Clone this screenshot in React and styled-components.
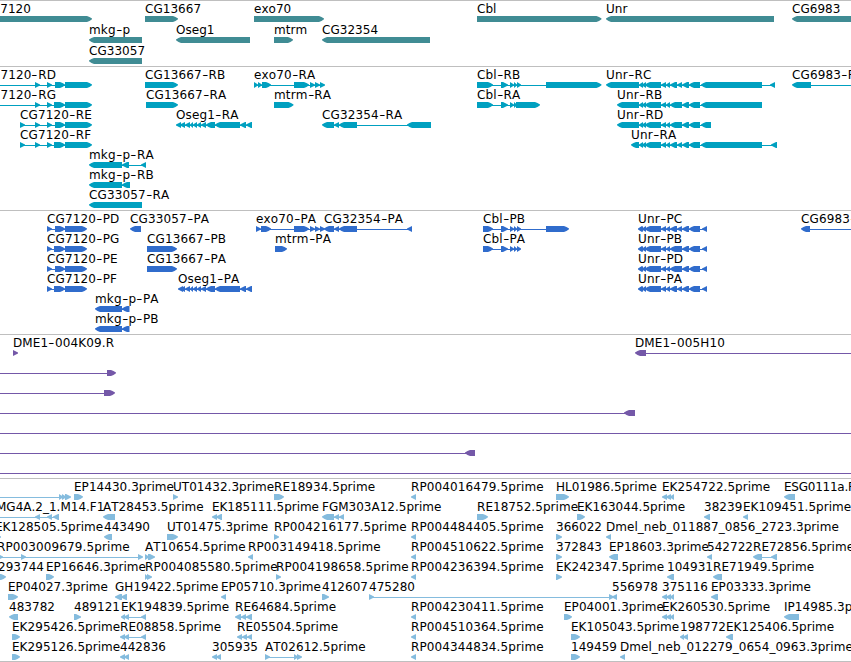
import React from 'react'
import styled, { createGlobalStyle } from 'styled-components';

const GlobalStyle = createGlobalStyle`
    body {
        margin: 0;
        background-color: #ffffff;
    }
`;

const Browser = styled.main`
    display: flex;
    flex-direction: column;
    width: 851px;
    height: 662px;
    overflow: hidden;
    font-family: 'DejaVu Sans', sans-serif;
    font-size: 12px;
    font-kerning: none;
    color: #000000;
`;

const Track = styled.section`
    display: flex;
    flex-direction: column;
    flex-shrink: 0;
    border-top: 1px solid #bfbfbf;
    padding: ${(props) => props.$padding};
    color: ${(props) => props.$color};
    &:last-child{
        border-bottom: 1px solid #bfbfbf;
    }
`;

const Row = styled.div`
    position: relative;
    display: flex;
    align-items: flex-end;
    height: ${(props) => props.$height}px;
    width: 100%;
`;

const Glyphs = styled.svg`
    display: block;
    width: 851px;
    height: 6px;
    fill: currentColor;
`;

const Label = styled.span`
    position: absolute;
    bottom: 6px;
    line-height: 14px;
    white-space: nowrap;
    letter-spacing: ${(props) => props.$spacing}px;
    color: #000000;
`;

const Dash = styled.span`
    display: inline-block;
    width: 6.8px;
    letter-spacing: 0;
    text-align: center;
    transform: scaleX(1.4);
`;

// feature: [name, strand, blocks, letter spacing], positions in pixels from the left edge
const oseg = [[180, 185], [185, 190], [190, 193], [193, 197], [197, 201], [201, 206], [206, 215], [215, 240], [240, 246], [246, 252]];
const exoTail = [[294, 309], [310, 315], [315, 320], [320, 325]];
const cblMid = [[501, 508], [510, 514], [514, 517], [517, 521]];
const unrHead = [[639, 643], [642, 646], [645, 661], [661, 666], [666, 670]];
const unrSplit = [[670, 677], [677, 682]];
const unrWhole = [[670, 682]];
const unrTail = [[682, 689], [689, 700]];
const unrLong = [701, 762];
const triple = [[662, 667], [666, 671], [670, 674]];
const rpBlock = [[411, 416]];

const tracks = [
    {
        id: 'genes',
        color: '#408c94',
        height: 21,
        padding: '0 0 2px',
        rows: [
            [
                ['CG7120', '>', [[-17.5, 92]]],
                ['CG13667', '>', [[145, 178]]],
                ['exo70', '>', [[254, 324]]],
                ['Cbl', '>', [[477, 601.5]]],
                ['Unr', '<', [[606, 774]]],
                ['CG6983', '<', [[792, 870]]],
            ],
            [
                ['mkg-p', '<', [[89, 142]]],
                ['Oseg1', '<', [[176, 250]]],
                ['mtrm', '>', [[274, 293]]],
                ['CG32354', '<', [[322, 430]]],
            ],
            [
                ['CG33057', '<', [[89, 142]]],
            ],
        ]
    },
    {
        id: 'transcripts',
        color: '#00a0c0',
        height: 20,
        padding: '1px 0 2px',
        rows: [
            [
                ['CG7120-RD', '>', [[-17.5, -12], [35, 40], [47, 52], [55, 65], [65, 92]]],
                ['CG13667-RB', '>', [[145, 178]]],
                ['exo70-RA', '>', [[254, 258], [258, 262], [262, 271], ...exoTail]],
                ['Cbl-RB', '>', [[477, 493], ...cblMid, [546, 601.5]]],
                ['Unr-RC', '<', [[606, 639], ...unrHead, ...unrSplit, ...unrTail, unrLong, [770, 775]]],
                ['CG6983-RA', '<', [[792, 811], [865, 870]]],
            ],
            [
                ['CG7120-RG', '>', [[-17.5, -12], [35, 40], [47, 52], [54, 65], [65, 92]]],
                ['CG13667-RA', '>', [[146, 178]]],
                ['mtrm-RA', '>', [[274, 293.5]]],
                ['Cbl-RA', '>', [[477, 493], [501, 508], [510, 514], [514, 517], [516, 540]]],
                ['Unr-RB', '<', [[617, 639], ...unrHead, ...unrWhole, ...unrTail, unrLong]],
            ],
            [
                ['CG7120-RE', '>', [[20, 25], [35, 40], [47, 52], [55, 65], [65, 92]]],
                ['Oseg1-RA', '<', [[176, 181], ...oseg]],
                ['CG32354-RA', '<', [[322, 334], [334, 339], [339, 357], [407, 431]]],
                ['Unr-RD', '<', [[617, 639], ...unrHead, ...unrWhole, ...unrTail, [701, 711]]],
            ],
            [
                ['CG7120-RF', '>', [[20, 25], [35, 40], [47, 52], [54, 65], [65, 92]]],
                ['Unr-RA', '<', [[631, 639], ...unrHead, ...unrSplit, ...unrTail, unrLong, [771, 777]]],
            ],
            [
                ['mkg-p-RA', '<', [[89, 122], [122, 129], [141, 146]]],
            ],
            [
                ['mkg-p-RB', '<', [[89, 122], [122, 130]]],
            ],
            [
                ['CG33057-RA', '<', [[89, 142]]],
            ],
        ]
    },
    {
        id: 'proteins',
        color: '#306ccc',
        height: 20,
        padding: '1px 0 2px',
        rows: [
            [
                ['CG7120-PD', '>', [[47, 52], [55, 65], [65, 87]]],
                ['CG33057-PA', '<', [[130, 141]]],
                ['exo70-PA', '>', [[256, 261], [261, 271], ...exoTail]],
                ['CG32354-PA', '<', [[324, 334], [334, 339], [339, 357], [407, 412]]],
                ['Cbl-PB', '>', [[483, 493], ...cblMid, [546, 569]]],
                ['Unr-PC', '<', [[638, 642], ...unrHead, ...unrSplit, ...unrTail, [702, 707]]],
                ['CG6983-PA', '<', [[801, 810], [865, 870]]],
            ],
            [
                ['CG7120-PG', '>', [[47, 52], [54, 65], [65, 87]]],
                ['CG13667-PB', '>', [[147, 177]]],
                ['mtrm-PA', '>', [[275, 287]]],
                ['Cbl-PA', '>', [[483, 493], ...cblMid]],
                ['Unr-PB', '<', [[638, 642], ...unrHead, ...unrWhole, ...unrTail, [702, 707]]],
            ],
            [
                ['CG7120-PE', '>', [[47, 52], [55, 65], [65, 87]]],
                ['CG13667-PA', '>', [[147, 177]]],
                ['Unr-PD', '<', [[638, 642], ...unrHead, ...unrWhole, ...unrTail, [702, 707]]],
            ],
            [
                ['CG7120-PF', '>', [[47, 52], [54, 65], [65, 87]]],
                ['Oseg1-PA', '<', [[178, 183], ...oseg]],
                ['Unr-PA', '<', [[638, 642], ...unrHead, ...unrSplit, ...unrTail, [702, 707]]],
            ],
            [
                ['mkg-p-PA', '<', [[95, 122], [122, 129.5]]],
            ],
            [
                ['mkg-p-PB', '<', [[95, 122], [122, 129.5]]],
            ],
        ]
    },
    {
        id: 'clones',
        color: '#7458a8',
        height: 20,
        padding: '1px 0 2px',
        rows: [
            [
                ['DME1-004K09.R', '>', [[13, 18]]],
                ['DME1-005H10', '<', [[635, 646], [865, 870]]],
            ],
            [['', '>', [[-20, -15], [107, 116]]]],
            [['', '>', [[-20, -15], [104, 115]]]],
            [['', '<', [[-20, -15], [624, 635]]]],
            [['', '<', [[-20, -15], [865, 870]]]],
            [['', '<', [[-20, -15], [465, 475]]]],
            [['', '<', [[-20, -15], [865, 870]]]],
        ]
    },
    {
        id: 'ests',
        color: '#85bcde',
        height: 20,
        padding: '1px 0 1px',
        rows: [
            [
                ['', '>', [[-20, -15], [59, 63], [62, 66], [65, 71]]],
                ['EP14430.3prime', '>', [[74, 83]]],
                ['UT01432.3prime', '>', [[173, 178]]],
                ['RE18934.5prime', '>', [[274, 284]]],
                ['RP004016479.5prime', '<', rpBlock],
                ['HL01986.5prime', '>', [[556, 569]]],
                ['EK254722.5prime', '<', triple],
                ['ESG0111a.F', '<', [[784, 795]], -0.25],
            ],
            [
                ['MG4A.2_1.M14.F1', '<', [[-4, 0], [35, 40], [47, 52], [53, 59]], 0],
                ['AT28453.5prime', '<', [[103, 115]]],
                ['EK185111.5prime', '<', [[212, 217], [216, 222]], -0.05],
                ['FGM303A12.5prime', '<', [[322, 334], [334, 339], [339, 344]], 0],
                ['RE18752.5prime', '>', [[477, 488]]],
                ['EK163044.5prime', '>', [[577, 585]]],
                ['38239', '<', [[704, 710]]],
                ['EK109451.5prime', '<', [[743, 748]]],
            ],
            [
                ['EK128505.5prime', '>', [[-5, 1]]],
                ['443490', '<', [[104, 112]]],
                ['UT01475.3prime', '>', [[167, 178]]],
                ['RP004216177.5prime', '>', [[274, 279]]],
                ['RP004484405.5prime', '<', rpBlock],
                ['366022', '>', [[556, 562]]],
                ['Dmel_neb_011887_0856_2723.3prime', '<', [[606, 611]]],
            ],
            [
                ['RP003009679.5prime', '>', [[-3, 3], [21, 26], [138, 143]]],
                ['AT10654.5prime', '>', [[145, 149], [148, 155]]],
                ['RP003149418.5prime', '<', [[248, 253]]],
                ['RP004510622.5prime', '<', rpBlock],
                ['372843', '>', [[556, 562]]],
                ['EP18603.3prime', '<', [[609, 618]]],
                ['542722', '<', [[707, 712]]],
                ['RE72856.5prime', '<', [[753, 762], [771, 777]]],
            ],
            [
                ['293744', '>', [[-2, 6]]],
                ['EP16646.3prime', '>', [[46, 54]]],
                ['RP004085580.5prime', '>', [[145, 148], [147, 152]]],
                ['RP004198658.5prime', '>', [[276, 281]]],
                ['RP004236394.5prime', '<', rpBlock],
                ['EK242347.5prime', '>', [[556, 562]]],
                ['104931', '<', [[667, 674]]],
                ['RE71949.5prime', '<', [[713, 722]]],
            ],
            [
                ['EP04027.3prime', '>', [[8, 18]]],
                ['GH19422.5prime', '<', [[115, 122], [121, 127]]],
                ['EP05710.3prime', '<', [[221, 226]]],
                ['412607', '>', [[322, 329]]],
                ['475280', '>', [[369, 374], [609, 614]]],
                ['556978', '<', [[612, 617]]],
                ['375116', '<', triple],
                ['EP03333.3prime', '<', [[711, 718]]],
            ],
            [
                ['483782', '<', [[9, 18]]],
                ['489121', '>', [[74, 81]]],
                ['EK194839.5prime', '<', [[121, 125], [124, 129], [141, 146]]],
                ['RE64684.5prime', '<', [[235, 241], [241, 246], [246, 252]]],
                ['RP004230411.5prime', '<', rpBlock],
                ['EP04001.3prime', '>', [[564, 572]]],
                ['EK260530.5prime', '<', triple],
                ['IP14985.3prime', '<', [[784, 799]]],
            ],
            [
                ['EK295426.5prime', '>', [[12, 20]]],
                ['RE08858.5prime', '<', [[120, 125], [124, 129], [141, 146]]],
                ['RE05504.5prime', '<', [[237, 242], [242, 247], [247, 252]]],
                ['RP004510364.5prime', '<', rpBlock],
                ['EK105043.5prime', '>', [[571, 580]]],
                ['198772', '<', [[680, 684], [683, 688]]],
                ['EK125406.5prime', '<', [[726, 733]]],
            ],
            [
                ['EK295126.5prime', '>', [[12, 20]]],
                ['442836', '<', [[120, 125], [124, 129]]],
                ['305935', '<', [[212, 217], [216, 221]]],
                ['AT02612.5prime', '>', [[265, 270], [294, 298], [297, 302]]],
                ['RP004344834.5prime', '<', rpBlock],
                ['149459', '>', [[571, 580]]],
                ['Dmel_neb_012279_0654_0963.3prime', '<', [[620, 625]]],
            ],
        ]
    },
];

// a bar with a rounded-off point; short blocks become a plain triangle
const blockPath = (start, end, strand) => {
    const right = strand === '>';
    const width = end - start;
    const tip = Math.min(5, width);
    const tail = right ? start : end;
    const head = right ? end : start;
    const back = (distance) => (right ? head - distance : head + distance);
    if (width <= 7) {
        return `M${tail} 0H${back(tip)}L${head} 2.5V3.5L${back(tip)} 6H${tail}Z`;
    }
    return `M${tail} 0H${back(tip)}L${back(2.5)} 1L${head} 2.5V3.2L${back(2.5)} 5L${back(tip)} 6H${tail}Z`;
}

function Feature({ strand, blocks }) {
    const start = blocks[0][0];
    const end = blocks[blocks.length - 1][1];
    return (
        <g>
            {blocks.length > 1 && <rect x={start + 2} y='3' width={end - start - 4} height='1' />}
            {blocks.map(([from, to]) => (
                <path key={from} d={blockPath(from, to, strand)} />
            ))}
        </g>
    )
}

const defaultSpacing = (name) => (name.includes('-') || name.startsWith('RP') ? 0.12 : 0.04);

function FeatureLabel({ name, left, spacing = defaultSpacing(name) }) {
    return (
        <Label $spacing={spacing} style={{ left }}>
            {name.split('-').map((part, index) => (
                <React.Fragment key={index}>
                    {index > 0 && <Dash>-</Dash>}
                    {part}
                </React.Fragment>
            ))}
        </Label>
    )
}

function App() {
    return (
        <>
            <GlobalStyle />
            <Browser>
                {tracks.map((track) => (
                    <Track key={track.id} $color={track.color} $padding={track.padding}>
                        {track.rows.map((features, index) => (
                            <Row key={index} $height={track.height}>
                                <Glyphs viewBox='0 0 851 6'>
                                    {features.map(([name, strand, blocks]) => (
                                        <Feature key={name} strand={strand} blocks={blocks} />
                                    ))}
                                </Glyphs>
                                {features.filter(([name]) => name).map(([name, , blocks, spacing]) => (
                                    <FeatureLabel key={name} name={name} left={blocks[0][0]} spacing={spacing} />
                                ))}
                            </Row>
                        ))}
                    </Track>
                ))}
            </Browser>
        </>
    )
}

export default App
